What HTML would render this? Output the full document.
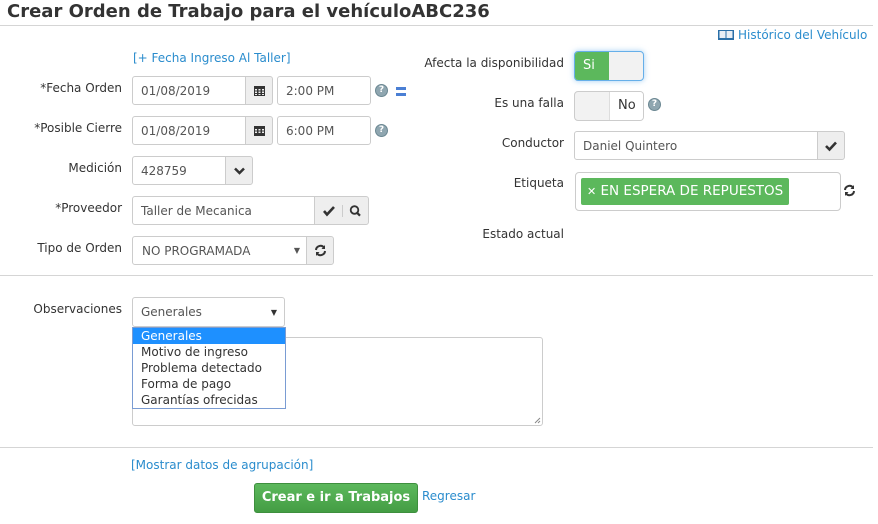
<!DOCTYPE html>
<html><head><meta charset="utf-8"><style>
*{box-sizing:border-box;margin:0;padding:0}
body{width:878px;height:524px;background:#fff;font-family:"DejaVu Sans","Liberation Sans",sans-serif;font-size:12px;color:#333;position:relative;overflow:hidden}
.a{position:absolute}
.lbl{position:absolute;text-align:right;line-height:16px}
.inp{position:absolute;border:1px solid #ccc;border-radius:3px;background:#fff;padding-left:8px;display:flex;align-items:center;color:#555;font-size:12px}
.add{position:absolute;border:1px solid #ccc;background:#eee;display:flex;align-items:center;justify-content:center;color:#333}
.lnk{color:#2a8ccd}
.q{position:absolute;width:13px;height:13px;border-radius:50%;background:#8fa6b0;border:1px solid #6b8792;color:#fff;font-size:9px;font-weight:bold;text-align:center;line-height:11px}
.hr{position:absolute;left:0;height:1px;background:#d5d5d5}
</style></head><body>
<div class="a" style="left:7px;top:0;font-size:18px;font-weight:bold;color:#333;line-height:24px">Crear Orden de Trabajo para el vehículoABC236</div>
<div class="hr" style="top:25px;width:873px"></div>

<div class="a lnk" style="left:133px;top:51px">[+ Fecha Ingreso Al Taller]</div>

<div class="lbl" style="left:0;width:122px;top:80px">*Fecha Orden</div>
<div class="inp" style="left:132px;top:76px;width:114px;height:29px;border-radius:3px 0 0 3px">01/08/2019</div>
<div class="add" style="left:245px;top:76px;width:28px;height:29px;border-radius:0 3px 3px 0"><svg width="11" height="11"><rect x="0" y="1" width="11" height="10" fill="#333"/><g fill="#eee"><rect x="1" y="4" width="2" height="1.5"/><rect x="4.5" y="4" width="2" height="1.5"/><rect x="8" y="4" width="2" height="1.5"/><rect x="1" y="6.5" width="2" height="1.5"/><rect x="4.5" y="6.5" width="2" height="1.5"/><rect x="8" y="6.5" width="2" height="1.5"/><rect x="1" y="9" width="2" height="1"/><rect x="4.5" y="9" width="2" height="1"/><rect x="8" y="9" width="2" height="1"/></g></svg></div>
<div class="inp" style="left:277px;top:76px;width:94px;height:29px">2:00 PM</div>
<div class="q" style="left:375px;top:84px">?</div>
<div class="a" style="left:396px;top:87px;width:10px;height:3px;background:#4a7fd4"></div>
<div class="a" style="left:396px;top:93px;width:10px;height:3px;background:#4a7fd4"></div>

<div class="lbl" style="left:0;width:122px;top:120px">*Posible Cierre</div>
<div class="inp" style="left:132px;top:116px;width:114px;height:29px;border-radius:3px 0 0 3px">01/08/2019</div>
<div class="add" style="left:245px;top:116px;width:28px;height:29px;border-radius:0 3px 3px 0"><svg width="11" height="11"><rect x="0" y="1" width="11" height="10" fill="#333"/><g fill="#eee"><rect x="1" y="4" width="2" height="1.5"/><rect x="4.5" y="4" width="2" height="1.5"/><rect x="8" y="4" width="2" height="1.5"/><rect x="1" y="6.5" width="2" height="1.5"/><rect x="4.5" y="6.5" width="2" height="1.5"/><rect x="8" y="6.5" width="2" height="1.5"/></g></svg></div>
<div class="inp" style="left:277px;top:116px;width:94px;height:29px">6:00 PM</div>
<div class="q" style="left:375px;top:124px">?</div>

<div class="lbl" style="left:0;width:122px;top:160px">Medición</div>
<div class="inp" style="left:132px;top:156px;width:94px;height:29px;border-radius:3px 0 0 3px">428759</div>
<div class="add" style="left:225px;top:156px;width:28px;height:29px;border-radius:0 3px 3px 0"><svg width="11" height="8"><path d="M1 1.5 L5.5 6 L10 1.5" stroke="#333" stroke-width="2.5" fill="none"/></svg></div>

<div class="lbl" style="left:0;width:122px;top:200px">*Proveedor</div>
<div class="inp" style="left:132px;top:196px;width:183px;height:29px;border-radius:3px 0 0 3px">Taller de Mecanica</div>
<div class="add" style="left:314px;top:196px;width:55px;height:29px;border-radius:0 3px 3px 0"><svg width="55" height="14"><path d="M9 7 L12 10.5 L19 3" stroke="#333" stroke-width="2.6" fill="none"/><line x1="27.5" y1="1" x2="27.5" y2="13" stroke="#ccc"/><circle cx="39.5" cy="6" r="3.8" stroke="#333" stroke-width="1.8" fill="none"/><line x1="42" y1="8.7" x2="45" y2="11.7" stroke="#333" stroke-width="2.2"/></svg></div>

<div class="lbl" style="left:0;width:122px;top:240px">Tipo de Orden</div>
<div class="inp" style="left:132px;top:236px;width:175px;height:29px;border-radius:3px 0 0 3px;padding-left:9px">NO PROGRAMADA<span style="position:absolute;right:6px;font-size:8px;color:#555">▼</span></div>
<div class="add" style="left:306px;top:236px;width:28px;height:29px;border-radius:0 3px 3px 0"><svg width="13" height="13" viewBox="0 0 13 13"><path d="M2 6 A4.5 4.5 0 0 1 10 3.5" stroke="#333" stroke-width="2" fill="none"/><path d="M11 1 L11 5 L7.5 5Z" fill="#333"/><path d="M11 7 A4.5 4.5 0 0 1 3 9.5" stroke="#333" stroke-width="2" fill="none"/><path d="M2 12 L2 8 L5.5 8Z" fill="#333"/></svg></div>

<div class="a lnk" style="left:718px;top:28px;display:flex;align-items:center"><svg width="16" height="12" style="margin-right:4px"><rect x="0" y="1" width="16" height="10" fill="#2a6fa8"/><rect x="1.5" y="2" width="6" height="7" fill="#e8eef5"/><rect x="8.5" y="2" width="6" height="7" fill="#e8eef5"/></svg>Histórico del Vehículo</div>

<div class="lbl" style="left:400px;width:164px;top:55px">Afecta la disponibilidad</div>
<div class="a" style="left:574px;top:51px;width:70px;height:30px;border:1px solid #66afe9;border-radius:4px;box-shadow:0 0 6px rgba(102,175,233,.6);overflow:hidden;background:#f2f2f2">
<div style="position:absolute;left:0;top:0;width:34px;height:28px;background:#5cb85c;color:#fff;font-size:13px;line-height:28px;padding-left:8px">Si</div></div>

<div class="lbl" style="left:400px;width:164px;top:95px">Es una falla</div>
<div class="a" style="left:574px;top:91px;width:70px;height:30px;border:1px solid #ccc;border-radius:4px;overflow:hidden;background:#f2f2f2">
<div style="position:absolute;left:34px;top:0;width:35px;height:28px;background:#fff;border-left:1px solid #ddd;color:#333;font-size:13px;line-height:28px;padding-left:8px">No</div></div>
<div class="q" style="left:648px;top:98px">?</div>

<div class="lbl" style="left:400px;width:164px;top:135px">Conductor</div>
<div class="inp" style="left:574px;top:131px;width:244px;height:29px;border-radius:3px 0 0 3px">Daniel Quintero</div>
<div class="add" style="left:817px;top:131px;width:28px;height:29px;border-radius:0 3px 3px 0"><svg width="12" height="12"><path d="M1 6 L4.5 9.5 L11 2.5" stroke="#333" stroke-width="2.6" fill="none"/></svg></div>

<div class="lbl" style="left:400px;width:164px;top:175px">Etiqueta</div>
<div class="a" style="left:575px;top:172px;width:266px;height:39px;border:1px solid #ccc;border-radius:4px"></div>
<div class="a" style="left:581px;top:178px;width:208px;height:27px;background:#5cb85c;border-radius:2px;color:#fff;font-size:13.5px;line-height:27px;padding-left:6px;white-space:nowrap"><span style="font-size:11px">✕</span> EN ESPERA DE REPUESTOS</div>
<svg class="a" style="left:843px;top:184px" width="13" height="13" viewBox="0 0 13 13"><path d="M2 6 A4.5 4.5 0 0 1 10 3.5" stroke="#333" stroke-width="2" fill="none"/><path d="M11 1 L11 5 L7.5 5Z" fill="#333"/><path d="M11 7 A4.5 4.5 0 0 1 3 9.5" stroke="#333" stroke-width="2" fill="none"/><path d="M2 12 L2 8 L5.5 8Z" fill="#333"/></svg>

<div class="lbl" style="left:400px;width:164px;top:226px">Estado actual</div>

<div class="hr" style="top:275px;width:873px"></div>

<div class="lbl" style="left:0;width:122px;top:301px">Observaciones</div>
<div class="inp" style="left:132px;top:297px;width:153px;height:30px">Generales<span style="position:absolute;right:7px;font-size:8px;color:#333">▼</span></div>
<div class="a" style="left:132px;top:337px;width:411px;height:89px;border:1px solid #ccc;border-radius:3px"><svg style="position:absolute;right:1px;bottom:1px" width="7" height="7"><path d="M6 1 L1 6 M6 4 L4 6" stroke="#888" stroke-width="1"/></svg></div>
<div class="a" style="left:132px;top:327px;width:154px;height:82px;border:1px solid #7a9cd3;background:#fff;line-height:16px;color:#333">
<div style="background:#1e90ff;color:#fff;padding-left:8px">Generales</div>
<div style="padding-left:8px">Motivo de ingreso</div>
<div style="padding-left:8px">Problema detectado</div>
<div style="padding-left:8px">Forma de pago</div>
<div style="padding-left:8px">Garantías ofrecidas</div></div>

<div class="hr" style="top:447px;width:873px"></div>
<div class="a lnk" style="left:131px;top:458px">[Mostrar datos de agrupación]</div>
<div class="a" style="left:254px;top:483px;width:164px;height:30px;background:linear-gradient(#5cb85c,#449d44);border:1px solid #3e8f3e;border-radius:3px;color:#fff;font-weight:bold;font-size:13px;text-align:center;line-height:28px">Crear e ir a Trabajos</div>
<div class="a lnk" style="left:422px;top:489px">Regresar</div>
</body></html>
